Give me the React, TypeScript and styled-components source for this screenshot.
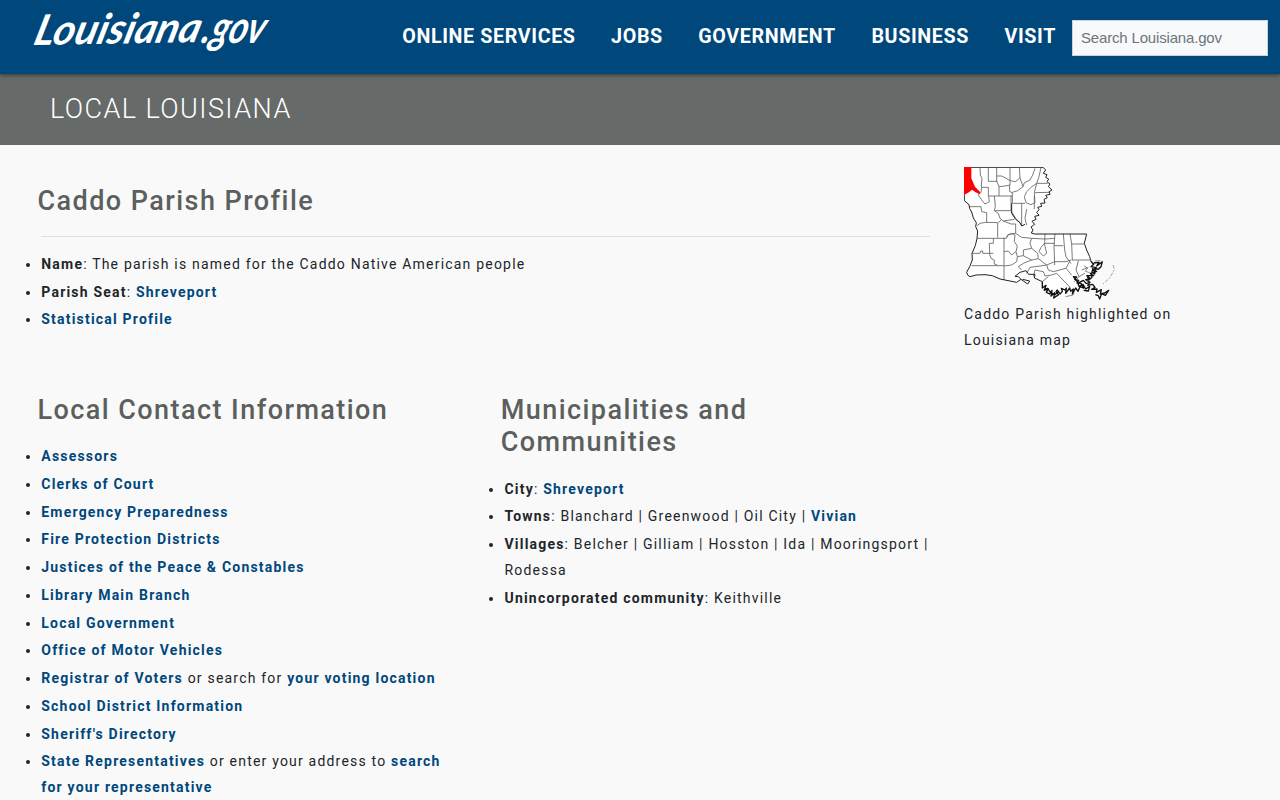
import React from "react";
import styled, { createGlobalStyle } from "styled-components";

const Global = createGlobalStyle`
  *{box-sizing:border-box}
  body{margin:0;background:#f9f9f9;color:#212529;font-family:Roboto,"Liberation Sans",sans-serif;font-size:14px;line-height:25.92px;letter-spacing:1.2px;overflow:hidden}
`;
const Page = styled.div`height:800px;overflow:hidden;`;
const Header = styled.header`height:74px;background:#00477b;display:flex;align-items:center;justify-content:space-between;padding:0 12px 0 30px;position:relative;box-shadow:0 1px 4px rgba(0,0,0,.5);`;
const Logo = styled.svg`display:block;width:244px;height:74px;overflow:visible;`;
const Nav = styled.nav`display:flex;align-items:center;`;
const NavLink = styled.a`color:#fff;font-size:19.7px;font-weight:700;line-height:24px;letter-spacing:.62px;text-transform:uppercase;margin:0 35.5px 0 0;white-space:nowrap;
  &:last-of-type{margin-right:16px}`;
const Search = styled.input`width:196px;height:36px;margin-top:2px;padding:0 8px 1px;border:1px solid #c9d3dc;border-radius:0;background:#f8f9fa;font:15px "Liberation Sans",sans-serif;letter-spacing:-.17px;
  &::placeholder{color:#6c757d;opacity:1}`;
const Banner = styled.div`height:71px;background:#666b6a;color:#fff;padding:19px 50px;font-size:27px;font-weight:300;line-height:32px;letter-spacing:1.44px;`;
const Main = styled.main`display:grid;grid-template-columns:931px 1fr;`;
const Content = styled.div`padding:40px 0 0;`;
const Columns = styled.div`display:grid;grid-template-columns:463.2px 467.8px;margin-top:59px;`;
const Heading = styled.h2`margin:0 0 0 37.5px;font-size:27px;font-weight:500;line-height:32px;letter-spacing:1.44px;color:#5b5f5e;`;
const Rule = styled.hr`border:0;border-top:1px solid #dfdfdf;margin:19px 1px 14.8px 41px;`;
const List = styled.ul<{ $top?: number }>`margin:${p => p.$top ?? 0}px 0 0;padding:0 0 0 41.3px;`;
const Item = styled.li`padding-bottom:1.83px;`;
const Link = styled.a`color:#00477b;font-weight:700;`;
const Side = styled.aside`padding:22px 0 0 33px;width:280px;`;
const MapArt = styled.svg`display:block;width:151px;height:135px;`;

const contacts = ["Assessors", "Clerks of Court", "Emergency Preparedness", "Fire Protection Districts", "Justices of the Peace & Constables", "Library Main Branch", "Local Government", "Office of Motor Vehicles"];

const ParishMap = () => (
  <MapArt viewBox="27 21 453 405" role="img" aria-label="Louisiana parishes" fill="none" strokeLinejoin="round">
    <path fill="#fff" d="M28 22H270L272 40 280 50 278 62 284 75 290 90 282 103 272 115 268 130 256 138 250 150 252 165 240 172 232 190 236 200 230 215 238 222 395 220 388 250 395 270 405 290 407 302 400 320 415 330 400 355 380 375 365 388 330 400 300 405 275 388 262 365 235 355 215 340 195 350 222 365 185 367 150 360 110 347 80 345 45 350 35 340 50 307 52 290 58 270 62 240 68 215 60 185 48 155 45 135 28 120Z" />
    <g stroke="#666" strokeWidth="2.6">
      <path d="M75 22L76 45 81 55 79 75 80 82 78 97 70 105 80 120 90 132 103 125 101 108M100 22V64H127M125 22V64L132 80 150 78 165 75 165 62 152 54 140 48 125 48M80 82H100V108H172M132 80V108M165 22V62L182 65 195 53 193 22M164 75V95L172 98V130H210M172 97L188 92 204 80 195 53M118 108L121 140 118 152H168V108M118 152L130 160 135 175 145 183 178 178M45 140H78L80 155 95 158V187M66 197L75 190 92 187 128 188V233M130 188L138 180M145 183L168 192 182 192V220L160 224 155 233" />
      <path d="M200 130V195M204 80L208 68 225 60 233 45 240 25M258 22L252 50 245 70H278M245 70L228 82 215 95 208 110 213 128 228 134 240 128 238 98 245 70M240 98L282 97M238 108V147M170 155L182 175 200 195M215 147L210 175 215 195M66 235H155M115 235V250H103L104 280M52 280H75L77 273 83 273V280H115M103 280L108 295 118 300V312L128 316M50 317H147M147 233V360M155 233L158 225 170 220 180 225 178 245 187 258 183 275 170 285 160 273 147 275M147 318L170 315 185 305 187 290 183 275M182 220L200 232 230 235 225 250 230 265 205 270 205 287 187 290" />
      <path d="M230 235L270 237 300 235M270 221L269 250 258 262 252 275 265 288 275 280 268 250H300M300 221L297 256 299 315M297 257H325M325 221L329 270 333 290 348 311M345 222L350 252 352 300M350 252H388M350 300H405M230 265L248 280 250 296 230 300 205 287M250 296L275 315 299 305 333 305 348 300M200 330L190 320 205 310 230 300M215 340L225 322 255 318 275 315 280 330 295 335 333 325 345 302M235 350L240 330 265 335 270 348 290 345 305 340 345 382M262 365L280 350M333 325L350 345M370 302L363 330 372 350 358 365M372 350L390 340M380 330L400 322" />
    </g>
    <path stroke="#333" strokeWidth="2.6" d="M28 22.5H265" />
    <path stroke="#222" strokeWidth="3" d="M264 22L272 30 265 40 276 44 272 52 281 57 276 65 285 72 280 80 291 90 282 95 285 103 272 106 277 113 267 118 270 129 257 130 260 139 248 142 252 149 245 157 252 166 239 169 243 178 231 184 239 193 228 201 234 210 229 219 238 222H395L388 250 395 270 404 290 407 302M28 104V122L42 134 44 146 50 156 55 174 64 188 62 200 68 213 66 235 61 257 51 280 52 300 44 320 35 337 38 345 45 350 63 345 90 344 112 347 135 357 185 367 198 358 190 350 180 349 195 337 213 332 221 343 240 343 238 354 262 365M198 358L218 372 224 363 203 358M170 130V160L182 178 195 188 200 198 210 193" />
    <path stroke="#111" strokeWidth="4" d="M262 365L262 384 273 376 268 391 280 386 274 397 284 402 291 391 288 408 299 398 296 414 311 404 303 395 307 390 315 402 322 394 319 385 330 390 334 384 332 400 344 384 347 394 355 387 352 402 362 384 369 394 375 380 386 384 378 370 366 369 371 361 359 358 365 351 355 350 366 364 372 379 384 373 392 387 404 379 400 393 386 391M266 389L278 385 287 398 300 404 312 393" />
    <path stroke="#111" strokeWidth="4" d="M407 303L416 313 408 320 424 323 412 331 425 334 406 340 416 347 398 347 405 357 392 359 405 367 398 376 413 373 420 382 410 388 426 387 424 397 439 389 436 402 449 399 461 391 451 406 440 401 434 417 430 407 421 404M416 309L432 307 425 318 442 305 438 320 430 328 422 325 419 342 411 336 414 324M395 345L402 360 411 352 408 342M368 370L385 361 393 370 405 369" />
    <path stroke="#555" strokeWidth="2" d="M387 317L397 325 391 334 404 338M420 303L436 302M332 410L354 405 358 398" />
    <path stroke="#777" strokeWidth="2" strokeDasharray="12 4 5 4" d="M474 315L478 328 471 342 463 355 444 372" />
    <path fill="#f00" d="M27 21H49V55L60 80 76 97 74 103 62 97 51 89 42 97 27 105Z" />
  </MapArt>
);

export default function App() {
  return <><Global /><Page>
    <Header>
      <Logo viewBox="0 0 244 74" role="img" fill="#fff" fontFamily="Lato, sans-serif" fontStyle="italic" fontWeight="700">
        <text transform="translate(2 45) rotate(-1) skewX(-16)" fontSize="42" letterSpacing="0" textLength="166" lengthAdjust="spacingAndGlyphs">Louisiana</text>
        <text transform="translate(170 43) skewX(-16)" fontSize="45" letterSpacing="0" textLength="62" lengthAdjust="spacingAndGlyphs">.gov</text>
      </Logo>
      <Nav>
        {["Online Services", "Jobs", "Government", "Business", "Visit"].map(t => <NavLink key={t}>{t}</NavLink>)}
        <Search placeholder="Search Louisiana.gov" />
      </Nav>
    </Header>
    <Banner>LOCAL LOUISIANA</Banner>
    <Main>
      <Content>
        <Heading>Caddo Parish Profile</Heading>
        <Rule />
        <List>
          <Item><b>Name</b>: The parish is named for the Caddo Native American people</Item>
          <Item><b>Parish Seat</b>: <Link>Shreveport</Link></Item>
          <Item><Link>Statistical Profile</Link></Item>
        </List>
        <Columns>
          <section>
            <Heading>Local Contact Information</Heading>
            <List $top={18}>
              {contacts.map(t => <Item key={t}><Link>{t}</Link></Item>)}
              <Item><Link>Registrar of Voters</Link> or search for <Link>your voting location</Link></Item>
              <Item><Link>School District Information</Link></Item>
              <Item><Link>Sheriff's Directory</Link></Item>
              <Item><Link>State Representatives</Link> or enter your address to <Link>search for your representative</Link></Item>
            </List>
          </section>
          <section>
            <Heading>Municipalities and Communities</Heading>
            <List $top={18.7}>
              <Item><b>City</b>: <Link>Shreveport</Link></Item>
              <Item><b>Towns</b>: Blanchard | Greenwood | Oil City | <Link>Vivian</Link></Item>
              <Item><b>Villages</b>: Belcher | Gilliam | Hosston | Ida | Mooringsport | Rodessa</Item>
              <Item><b>Unincorporated community</b>: Keithville</Item>
            </List>
          </section>
        </Columns>
      </Content>
      <Side><ParishMap />Caddo Parish highlighted on Louisiana map</Side>
    </Main>
  </Page></>;
}
